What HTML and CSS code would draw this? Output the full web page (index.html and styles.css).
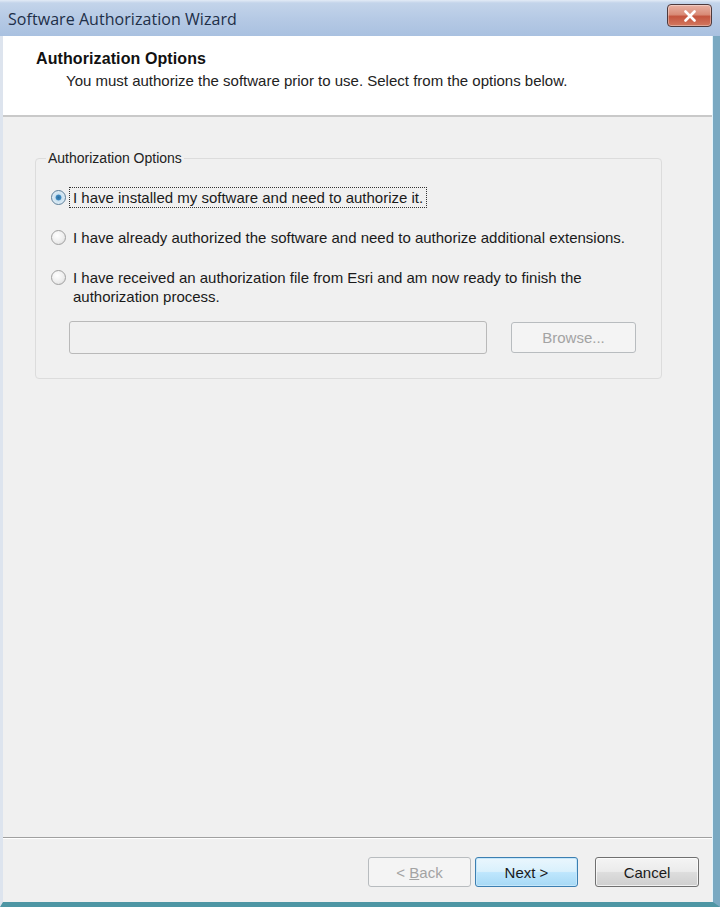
FILE: index.html
```html
<!DOCTYPE html>
<html>
<head>
<meta charset="utf-8">
<link rel="stylesheet" href="styles.css">
</head>
<body>
<div class="window">
  <div class="titlebar">
    <span class="title">Software Authorization Wizard</span>
    <button class="close" aria-label="Close">
      <svg width="14" height="12" viewBox="0 0 14 12"><path d="M2.5 1.5 L11.5 10.5 M11.5 1.5 L2.5 10.5" stroke="#ffffff" stroke-width="2.6" stroke-linecap="round"/></svg>
    </button>
  </div>
  <div class="frame">
    <div class="client">
      <div class="header">
        <div class="h-title">Authorization Options</div>
        <div class="h-sub">You must authorize the software prior to use. Select from the options below.</div>
      </div>
      <div class="content">
        <fieldset class="group">
          <legend class="legend">Authorization Options</legend>
          <div class="option">
            <span class="radio checked"></span>
            <span class="label focus">I have installed my software and need to authorize it.</span>
          </div>
          <div class="option">
            <span class="radio"></span>
            <span class="label">I have already authorized the software and need to authorize additional extensions.</span>
          </div>
          <div class="option">
            <span class="radio"></span>
            <span class="label">I have received an authorization file from Esri and am now ready to finish the<br>authorization process.</span>
          </div>
          <div class="file-row">
            <div class="textbox"></div>
            <button class="btn disabled browse">Browse...</button>
          </div>
        </fieldset>
      </div>
      <div class="footer">
        <button class="btn disabled wbtn">&lt; <u>B</u>ack</button>
        <button class="btn default wbtn">Next &gt;</button>
        <button class="btn wbtn cancel">Cancel</button>
      </div>
    </div>
  </div>
</div>
</body>
</html>
```

FILE: styles.css
```css
html, body {
  margin: 0;
  padding: 0;
  background: #f0f0f0;
}
body {
  font-family: "Liberation Sans", Arial, sans-serif;
  font-size: 15px;
  color: #1a1a1a;
}
.window {
  width: 720px;
  height: 907px;
  display: flex;
  flex-direction: column;
  overflow: hidden;
}
.titlebar {
  height: 36px;
  flex: none;
  display: flex;
  align-items: center;
  justify-content: space-between;
  padding: 0 8px 0 8px;
  box-sizing: border-box;
  background: linear-gradient(to bottom, #e3ebf6 0, #c3d4ea 3px, #b6cae5 50%, #a9c1e0 100%);
}
.title {
  font-family: "Open Sans", "Noto Sans", sans-serif;
  font-size: 16px;
  color: #1e2f48;
  padding-top: 2px;
  letter-spacing: 0.05px;
}
.close {
  width: 45px;
  height: 23px;
  margin-top: -5px;
  border: 1px solid #4d3a3d;
  border-radius: 4px;
  padding: 0;
  display: flex;
  align-items: center;
  justify-content: center;
  background: linear-gradient(to bottom, #e9b2a4 0, #d98c78 45%, #c4553f 55%, #d3785f 100%);
  box-shadow: inset 0 0 0 1px rgba(255,255,255,0.35);
}
.frame {
  flex: 1;
  display: flex;
  border-left: 3px solid #dde4ee;
  border-right: 7px solid #7aa9c2;
  border-bottom: 5px solid #4e96a4;
  min-height: 0;
}
.client {
  flex: 1;
  display: flex;
  flex-direction: column;
  background: #f0f0f0;
  border-right: 1px solid #e3f3fb;
}
.header {
  background: #ffffff;
  height: 81px;
  flex: none;
  box-sizing: border-box;
  padding: 15px 0 0 33px;
  border-bottom: 2px solid #c9c9c9;
}
.h-title {
  font-weight: bold;
  font-size: 16px;
  line-height: 16px;
  color: #111;
  letter-spacing: 0.1px;
}
.h-sub {
  margin: 6px 0 0 30px;
  line-height: 16px;
  color: #222;
}
.content {
  flex: 1;
  padding: 33px 0 0 32px;
}
.group {
  width: 627px;
  box-sizing: border-box;
  margin: 0;
  padding: 22px 0 24px 15px;
  border: 1px solid #dcdcdc;
  border-radius: 4px;
  min-width: 0;
}
.legend {
  padding: 0 2px;
  margin-left: -5px;
  line-height: 16px;
  color: #222;
  font-size: 14px;
}
.option {
  display: flex;
  align-items: flex-start;
  line-height: 19px;
  margin-bottom: 21px;
}
.option:nth-child(4) {
  margin-bottom: 15px;
}
.radio {
  flex: none;
  width: 13px;
  height: 13px;
  margin-top: 2px;
  border-radius: 50%;
  border: 1px solid #a0a0a0;
  background: radial-gradient(circle at 40% 35%, #ffffff 0, #ececec 60%, #d3d3d3 100%);
  box-sizing: content-box;
}
.radio.checked {
  border-color: #5b7e99;
  background: radial-gradient(circle at 50% 50%, #2c6e9e 0, #3d88bf 28%, #c9e0ef 36%, #eef5fa 100%);
}
.label {
  margin-left: 7px;
  color: #1a1a1a;
}
.focus {
  outline: 1px dotted #333;
  outline-offset: 0;
  padding: 0 3px 0 3px;
  margin-left: 4px;
}
.file-row {
  display: flex;
  align-items: flex-start;
  padding-left: 18px;
  gap: 24px;
}
.textbox {
  width: 418px;
  height: 33px;
  box-sizing: border-box;
  border: 1px solid #b9b9b9;
  border-radius: 3px;
  background: #f0f0f0;
}
.btn {
  font-family: "Liberation Sans", Arial, sans-serif;
  font-size: 15px;
  border-radius: 3px;
  border: 1px solid #707070;
  color: #1a1a1a;
  padding: 0;
  background: linear-gradient(to bottom, #f4f4f4 0, #ebebeb 48%, #dddddd 52%, #cfcfcf 100%);
  box-shadow: inset 0 0 0 1px rgba(255,255,255,0.7);
}
.btn.disabled {
  border-color: #b8bcbf;
  color: #a3a3a3;
  background: #f4f4f4;
  box-shadow: none;
}
.browse {
  width: 125px;
  height: 31px;
  margin-top: 1px;
}
.footer {
  flex: none;
  height: 65px;
  box-sizing: border-box;
  border-top: 1px solid #a0a0a0;
  box-shadow: inset 0 1px 0 #ffffff;
  display: flex;
  justify-content: flex-end;
  padding: 19px 13px 0 0;
  gap: 4px;
}
.wbtn {
  width: 103px;
  height: 30px;
}
.btn.default {
  border-color: #3c7fb1;
  background: linear-gradient(to bottom, #eaf6fd 0, #d9f0fc 48%, #bee6fd 52%, #a7d9f5 100%);
  box-shadow: inset 0 0 0 1px #c5e7fb;
}
.cancel {
  width: 104px;
  margin-left: 13px;
}
```
